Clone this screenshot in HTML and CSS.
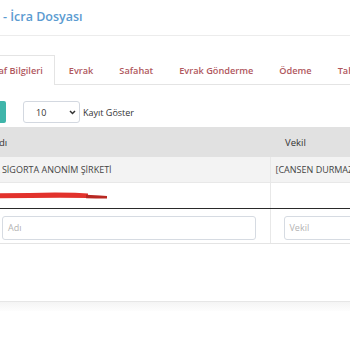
FILE: index.html
```html
<!DOCTYPE html>
<html>
<head>
    <title>İcra Dosyası</title>
    <meta charset="UTF-8">
    <meta name="viewport" content="width=device-width, initial-scale=1.0">
    <link rel="stylesheet" href="styles.css">
</head>
<body>
    <div class="page-title">- İcra Dosyası</div>

    <ul class="tabs">
        <li class="active">Taraf Bilgileri</li>
        <li>Evrak</li>
        <li>Safahat</li>
        <li>Evrak Gönderme</li>
        <li>Ödeme</li>
        <li>Tahsilat</li>
    </ul>

    <div class="toolbar">
        <button class="btn-add">Ekle</button>
        <div class="length-select">
            <span>10</span>
            <svg width="7" height="5" viewBox="0 0 7 5"><path d="M1 1 L3.5 3.5 L6 1" fill="none" stroke="#333" stroke-width="1.5"/></svg>
        </div>
        <span class="length-label">Kayıt Göster</span>
    </div>

    <table class="grid">
        <thead>
            <tr>
                <th class="col-name">Adı</th>
                <th class="col-vekil">Vekil</th>
            </tr>
        </thead>
        <tbody>
            <tr class="odd">
                <td>AXA SİGORTA ANONİM ŞİRKETİ</td>
                <td>[CANSEN DURMAZ]</td>
            </tr>
            <tr>
                <td>
                    <svg class="redact" width="110" height="10" viewBox="0 0 110 10">
                        <path d="M0 2.2 L30 2 L55 1.6 L75 1.8 L88 2.6 L88 7 L60 6.8 L30 7 L0 7.2 Z" fill="#e2322c"/>
                        <path d="M86 3.8 L100 4.4 L107 5 L107 7.4 L96 7.6 L86 7.2 Z" fill="#b82822"/>
                    </svg>
                </td>
                <td></td>
            </tr>
        </tbody>
        <tfoot>
            <tr>
                <td class="filter-name"><div class="filter-input">Adı</div></td>
                <td class="filter-vekil"><div class="filter-input">Vekil</div></td>
            </tr>
        </tfoot>
    </table>

    <div class="page-footer"></div>
</body>
</html>
```

FILE: styles.css
```css
body {
    margin: 0;
    font-family: "Open Sans", "Noto Sans", sans-serif;
    background-color: #fff;
    overflow: hidden;
    width: 350px;
    height: 350px;
}
.page-title {
    height: 35px;
    line-height: 34px;
    padding-left: 3px;
    font-size: 12.5px;
    font-weight: 600;
    color: #5b9bd1;
    border-bottom: 1px solid #ececec;
}
.tabs {
    list-style: none;
    display: flex;
    margin: 19px 0 0 -28px;
    padding: 0;
    border-bottom: 1px solid #e4e4e4;
    white-space: nowrap;
}
.tabs li {
    padding: 0 11px;
    margin-right: 2px;
    height: 28px;
    line-height: 29px;
    font-size: 9.2px;
    font-weight: 600;
    color: #b0585e;
    border: 1px solid transparent;
    border-bottom: none;
}
.tabs li.active {
    border-color: #e4e4e4;
    background-color: #fff;
    margin-bottom: -1px;
    height: 29px;
}
.toolbar {
    display: flex;
    align-items: center;
    margin: 14px 0 0 -30px;
    height: 26px;
}
.btn-add {
    width: 36px;
    height: 22px;
    border: none;
    border-radius: 2px;
    background-color: #3fb5aa;
    color: #fff;
    font-family: inherit;
    font-size: 9px;
    margin-right: 17px;
    padding: 0;
}
.length-select {
    height: 22px;
    border: 1px solid #d3d8e0;
    border-radius: 3px;
    display: flex;
    align-items: center;
    justify-content: space-between;
    padding: 0 3px 0 12px;
    box-sizing: border-box;
    width: 57px;
    font-size: 9px;
    color: #333;
}
.length-label {
    margin-left: 3px;
    font-size: 9px;
    color: #333;
}
.grid {
    border-collapse: collapse;
    margin: 2px 0 0 -22px;
    width: 442px;
    table-layout: fixed;
    font-size: 9px;
    color: #444;
}
.grid th {
    background-color: #e1e1e1;
    height: 30px;
    padding: 0 0 0 15px;
    text-align: left;
    font-weight: 400;
    font-size: 9.5px;
    color: #333;
}
.col-name {
    width: 277px;
}
.grid tbody td {
    padding: 0 0 0 5px;
    height: 25px;
    border-bottom: 1px solid #e8e8e8;
    text-transform: uppercase;
    white-space: nowrap;
    overflow: hidden;
}
.grid tbody td + td {
    border-left: 1px solid #e8e8e8;
}
.grid tbody tr.odd td {
    background-color: #f3f3f3;
}
.grid tbody tr:last-child td {
    border-bottom: 1px solid #2a2a2a;
}
.redact {
    display: block;
    margin-left: 17px;
}
.grid tfoot td {
    height: 35px;
    box-sizing: border-box;
    border-bottom: 1px solid #e4e4e4;
    vertical-align: top;
    padding-top: 7px;
}
.grid tfoot td + td {
    border-left: 1px solid #e8e8e8;
}
.filter-name {
    padding: 0 14px 0 24px;
}
.filter-vekil {
    padding: 0 0 0 13px;
}
.filter-input {
    height: 22px;
    line-height: 22px;
    border: 1px solid #d6dbe2;
    border-radius: 3px;
    padding-left: 5px;
    color: #b3b3b3;
    font-size: 9px;
}
.page-footer {
    margin-top: 57px;
    height: 9px;
    border-top: 1px solid #e6e6e6;
    background: linear-gradient(#f4f4f4, #fdfdfd);
}
```
